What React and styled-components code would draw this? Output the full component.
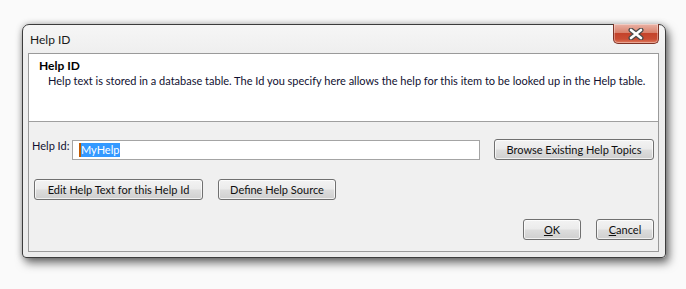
import React from "react";
import styled, { createGlobalStyle } from "styled-components";

const Global = createGlobalStyle`
  html, body { margin: 0; padding: 0; background: #fafafa; }
  body { font-family: Lato, "Liberation Sans", sans-serif; font-size: 11px; color: #000; white-space: nowrap; }
`;

const Stage = styled.div`
  width: 686px;
  height: 289px;
  padding: 24px 0 0 22px;
  box-sizing: border-box;
`;

const Window = styled.div`
  width: 644px;
  height: 234px;
  box-sizing: border-box;
  border: 1px solid #3c3c3c;
  border-radius: 7px 7px 4px 4px;
  background: linear-gradient(#f6f6f6, #eeeeee 30px, #ececec);
  box-shadow: 3px 5px 10px rgba(0, 0, 0, 0.55), 0 0 6px rgba(0, 0, 0, 0.25);
  padding: 0 6px 5px 5px;
  display: flex;
  flex-direction: column;
`;

const TitleBar = styled.div`
  height: 28px;
  display: flex;
  justify-content: space-between;
  align-items: flex-start;
  flex: none;
`;

const Title = styled.div`
  padding: 7px 0 0 2px;
  font-size: 12px;
  color: #1a1a1a;
`;

const CloseButton = styled.div`
  margin-top: -1px;
  width: 46px;
  height: 20px;
  box-sizing: border-box;
  border: 1px solid #7e3326;
  border-top: none;
  border-radius: 0 0 5px 5px;
  background: linear-gradient(#eab3a6 0%, #d9826d 45%, #c4432b 50%, #c94d34 80%, #e07b5f 100%);
  box-shadow: inset 0 0 0 1px rgba(255, 255, 255, 0.35);
  display: flex;
  align-items: center;
  justify-content: center;
`;

const Panel = styled.div`
  flex: 1;
  border: 1px solid #9a9a9a;
  background: #f0f0f0;
  display: flex;
  flex-direction: column;
`;

const Header = styled.div`
  height: 68px;
  background: #fff;
  border-bottom: 1px solid #9f9f9f;
  padding: 4px 10px 0 10px;
  box-sizing: border-box;
  flex: none;
`;

const HeaderTitle = styled.div`
  font-weight: bold;
  font-size: 12px;
  line-height: 15px;
`;

const HeaderText = styled.div`
  padding-left: 9px;
  line-height: 16px;
  color: #101030;
`;

const Body = styled.div`
  flex: 1;
  padding: 17px 4px 0 3px;
  display: flex;
  flex-direction: column;
  gap: 19px;
`;

const Row = styled.div`
  display: flex;
  align-items: flex-start;
  gap: ${(p) => p.$gap ?? 15}px;
  justify-content: ${(p) => (p.$end ? "flex-end" : "flex-start")};
  padding-left: ${(p) => p.$indent || 0}px;
`;

const Label = styled.div`
  width: 40px;
  line-height: 14px;
  color: #101030;
`;

const Input = styled.div`
  width: 408px;
  height: 20px;
  box-sizing: border-box;
  border: 1px solid #a4a4a4;
  background: #fff;
  margin-top: 1px;
  display: flex;
  align-items: center;
  padding-left: 6px;
`;

const Caret = styled.span`
  width: 2px;
  height: 14px;
  background: #c25a00;
`;

const Selected = styled.span`
  background: #3399ff;
  color: #fff;
  line-height: 14px;
  height: 14px;
  padding-right: 1px;
`;

const Button = styled.div`
  width: ${(p) => p.$w}px;
  height: 21px;
  flex: none;
  box-sizing: border-box;
  border: 1px solid #707070;
  border-radius: 3px;
  background: linear-gradient(#f3f3f3 0%, #ebebeb 48%, #dddddd 52%, #cfcfcf 100%);
  box-shadow: inset 0 0 0 1px rgba(255, 255, 255, 0.7);
  display: flex;
  align-items: center;
  justify-content: center;
  color: #101010;
  margin-left: ${(p) => p.$ml || 0}px;
`;

const U = styled.span`
  text-decoration: underline;
`;

export default function App() {
  return (
    <Stage>
      <Global />
      <Window>
        <TitleBar>
          <Title>Help ID</Title>
          <CloseButton>
            <svg width="16" height="12" viewBox="0 0 16 12">
              <path d="M3 2 L13 10 M13 2 L3 10" stroke="#4a4a4a" strokeWidth="5" strokeLinecap="round" />
              <path d="M3 2 L13 10 M13 2 L3 10" stroke="#ffffff" strokeWidth="2.6" strokeLinecap="round" />
            </svg>
          </CloseButton>
        </TitleBar>
        <Panel>
          <Header>
            <HeaderTitle>Help ID</HeaderTitle>
            <HeaderText>
              Help text is stored in a database table. The Id you specify here allows the help for this item to be looked up in the Help table.
            </HeaderText>
          </Header>
          <Body>
            <Row $gap={0}>
              <Label>Help Id:</Label>
              <Input>
                <Caret />
                <Selected>MyHelp</Selected>
              </Input>
              <Button $w={160} $ml={14}>Browse Existing Help Topics</Button>
            </Row>
            <Row $indent={2}>
              <Button $w={169}>Edit Help Text for this Help Id</Button>
              <Button $w={118}>Define Help Source</Button>
            </Row>
            <Row $end>
              <Button $w={58}><U>O</U>K</Button>
              <Button $w={58}><U>C</U>ancel</Button>
            </Row>
          </Body>
        </Panel>
      </Window>
    </Stage>
  );
}
